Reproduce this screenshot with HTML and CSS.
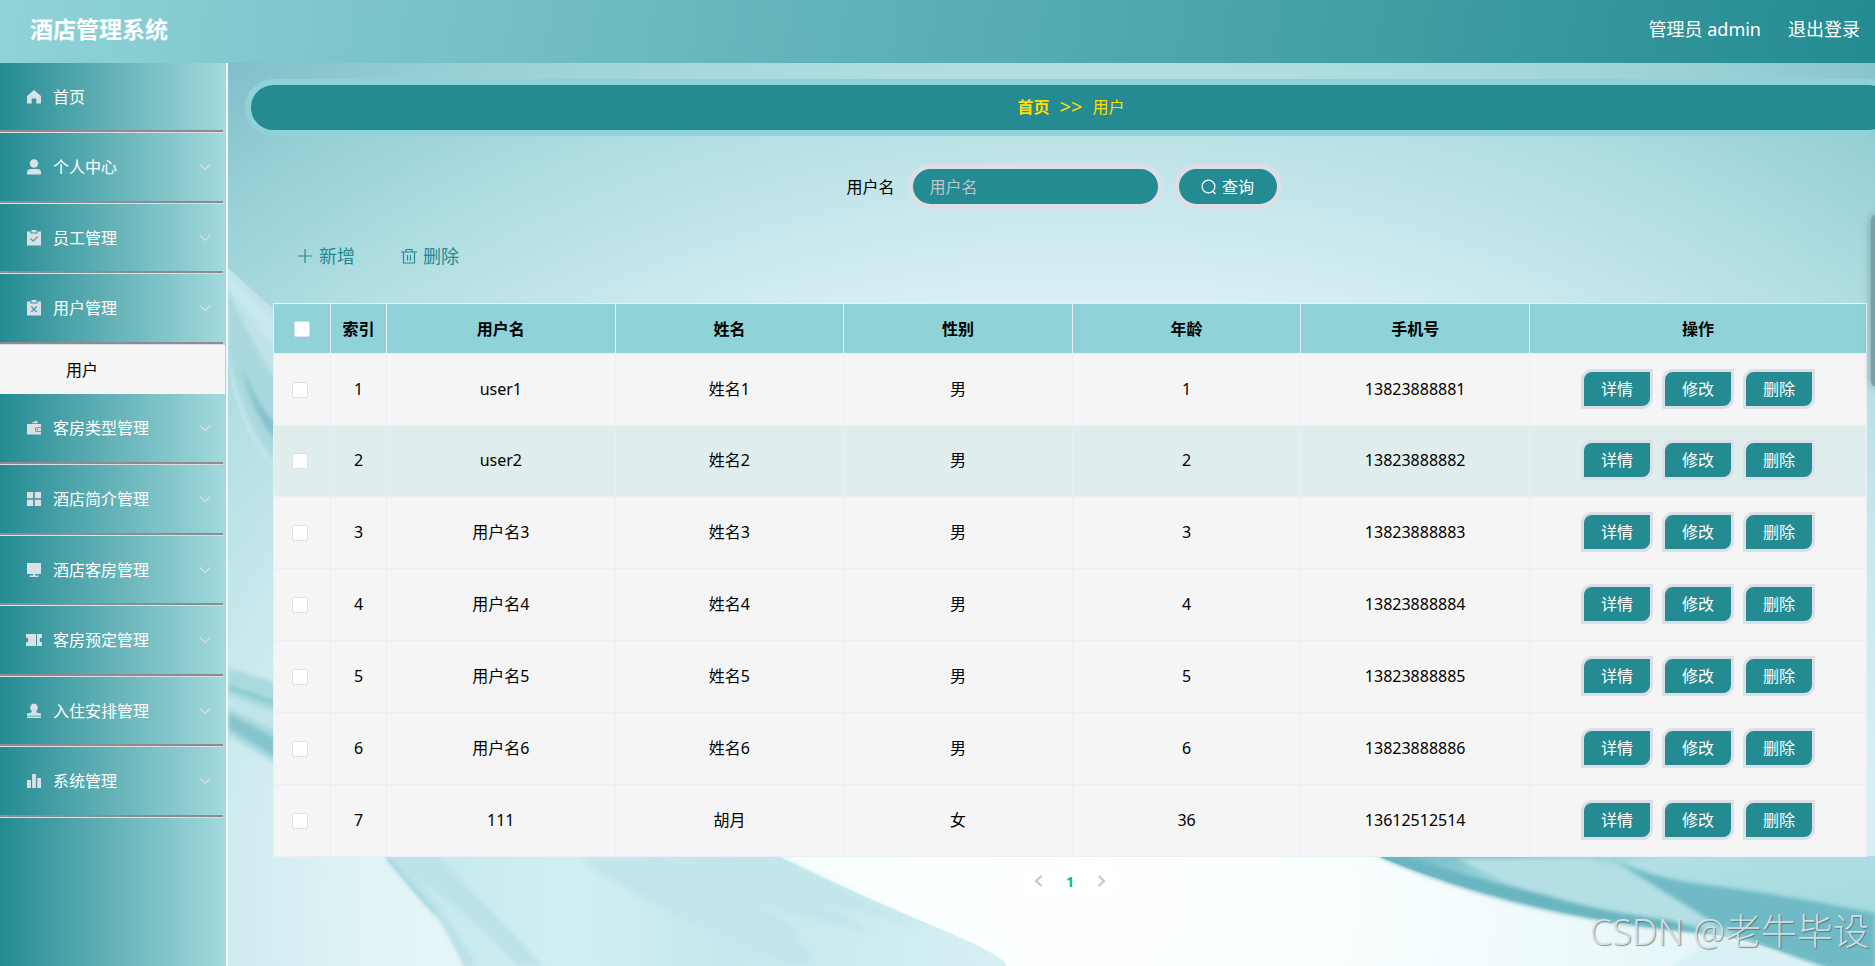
FILE: index.html
```html
<!DOCTYPE html>
<html lang="zh-CN">
<head>
<meta charset="utf-8">
<title>酒店管理系统</title>
<link rel="stylesheet" href="styles.css">
</head>
<body>
<svg class="sprite" aria-hidden="true">
  <symbol id="chevron" viewBox="0 0 12 12"><path d="M1 3.5 6 8.500 11 3.500" fill="none" stroke="currentColor" stroke-width="1.100"/></symbol>
</svg>
<header class="topbar">
  <h1 class="brand">酒店管理系统</h1>
  <div class="account"><span>管理员 admin</span><a href="#">退出登录</a></div>
</header>
<div class="shell">
  <nav class="sidebar">
    <ul class="menu">
      <li><a class="item" href="#"><svg class="icon" viewBox="0 0 18 18"><path d="M9 2 16 8v7.500h-4.700v-5H6.700v5H2V8z"/></svg><span>首页</span></a></li>
      <li><a class="item" href="#"><svg class="icon" viewBox="0 0 18 18"><circle cx="9" cy="5.500" r="4.200"/><path d="M2 16.500v-2q0-3.500 3.500-3.500h7q3.500 0 3.500 3.500v2z"/></svg><span>个人中心</span><svg class="arrow"><use href="#chevron"/></svg></a></li>
      <li><a class="item" href="#"><svg class="icon" viewBox="0 0 18 18"><path d="M2 2.500h3.500v2h7v-2H16v14H2z"/><path d="M6.500 1h5v2.500h-5z"/><path d="m5.500 9.500 2.700 2.700 4.500-4.500" fill="none" stroke="#46a0a8" stroke-width="1.200"/></svg><span>员工管理</span><svg class="arrow"><use href="#chevron"/></svg></a></li>
      <li><a class="item" href="#"><svg class="icon" viewBox="0 0 18 18"><path d="M2 2.500h3.500v2h7v-2H16v14H2z"/><path d="M6.500 1h5v2.500h-5z"/><path d="m6.300 7.500 5.400 5.500m0-5.500-5.400 5.500" fill="none" stroke="#46a0a8" stroke-width="1.200"/></svg><span>用户管理</span><svg class="arrow"><use href="#chevron"/></svg></a>
        <a class="subitem" href="#">用户</a></li>
      <li><a class="item" href="#"><svg class="icon" viewBox="0 0 18 18"><path d="M2 5h14v3h-3.500a2.500 2.500 0 0 0 0 5H16v2.500H2z"/><path d="m6 4.200 5.500-2.700 1.500 2.700z"/><path d="M16 8.800v3.400h-3.400a1.700 1.700 0 0 1 0-3.400z"/><circle cx="12.800" cy="10.500" r=".8" fill="#46a0a8"/></svg><span>客房类型管理</span><svg class="arrow"><use href="#chevron"/></svg></a></li>
      <li><a class="item" href="#"><svg class="icon" viewBox="0 0 18 18"><path d="M2 2h6.200v6.200H2zM9.800 2H16v6.200H9.800zM2 9.800h6.200V16H2zM9.800 9.800H16V16H9.800z"/></svg><span>酒店简介管理</span><svg class="arrow"><use href="#chevron"/></svg></a></li>
      <li><a class="item" href="#"><svg class="icon" viewBox="0 0 18 18"><path d="M2 2h14v11H2zM8 13h2v1.500h3.500V16h-9v-1.500H8z"/></svg><span>酒店客房管理</span><svg class="arrow"><use href="#chevron"/></svg></a></li>
      <li><a class="item" href="#"><svg class="icon" viewBox="0 0 18 18"><path d="M1 3h10v12H1v-3.500c3 0 3-5 0-5zM12 3h5v3.500c-3 0-3 5 0 5V15h-5z"/></svg><span>客房预定管理</span><svg class="arrow"><use href="#chevron"/></svg></a></li>
      <li><a class="item" href="#"><svg class="icon" viewBox="0 0 18 18"><path d="M9 1.500a4 4 0 0 1 2.500 7v2L16 11.500v2.200H2v-2.200l4.500-1v-2a4 4 0 0 1 2.500-7zM2 14.500h14V16H2z"/></svg><span>入住安排管理</span><svg class="arrow"><use href="#chevron"/></svg></a></li>
      <li><a class="item" href="#"><svg class="icon" viewBox="0 0 18 18"><path d="M2 8h3.800v8H2zM7.100 2h3.800v14H7.100zM12.200 6H16v10h-3.800z"/></svg><span>系统管理</span><svg class="arrow"><use href="#chevron"/></svg></a></li>
    </ul>
  </nav>
  <main class="main">
    <svg class="backdrop" viewBox="0 0 1647 903" preserveAspectRatio="none" aria-hidden="true">
      <defs>
        <radialGradient id="glow" gradientUnits="userSpaceOnUse" cx="0" cy="0" r="1092" gradientTransform="translate(860 840) scale(1.3 1)">
          <stop offset="0" stop-color="#fefeff"/><stop offset=".2" stop-color="#f8fefe"/><stop offset=".52" stop-color="#dff3f6"/><stop offset=".64" stop-color="#c8e8ec"/><stop offset=".77" stop-color="#afdde1"/><stop offset=".88" stop-color="#98d0d6"/><stop offset="1" stop-color="#7bbac5"/>
        </radialGradient>
        <linearGradient id="veil" x1="0" y1="0" x2="1" y2="0"><stop offset="0" stop-color="#c3e7ec"/><stop offset=".3" stop-color="#d1eff1"/><stop offset=".55" stop-color="#c5e8ec"/><stop offset="1" stop-color="#d6f0f3"/></linearGradient>
        <linearGradient id="ribbon" x1="0" y1="0" x2="1" y2="1"><stop offset="0" stop-color="#6ab9c3"/><stop offset=".3" stop-color="#b0dfe4"/><stop offset="1" stop-color="#a1d8de"/></linearGradient>
        <filter id="soft" x="-10%" y="-10%" width="120%" height="120%"><feGaussianBlur stdDeviation="2"/></filter>
        <filter id="softer" x="-10%" y="-10%" width="120%" height="120%"><feGaussianBlur stdDeviation="4"/></filter>
      </defs>
      <path fill="url(#glow)" d="M0 0h1647v903H0z"/>
      <path fill="#bfe3e9" d="M0 205 50 250V410Q10 370 0 300z"/>
      <g filter="url(#soft)">
        <path fill="#a9d9de" d="M0 228Q24 280 50 320V402Q14 360 0 290z"/>
        <path fill="#c9e8ee" d="M0 212Q30 240 50 258V290Q25 255 0 225z"/>
        <path fill="#84c3cc" d="M14 303Q30 345 50 362V380Q22 350 14 303z"/>
        <path fill="#a9dade" d="M0 605 50 620V702L0 672z"/>
        <path fill="#7fc5cc" d="M0 622 50 639V643L0 626z"/>
        <path fill="#c0e5ea" d="M0 632 50 650V668L0 645z"/>
        <path fill="#86c5cd" d="M0 650 50 676V696L0 665z"/>
      </g>
      <path fill="url(#veil)" d="M157 793H550Q640 836 710 865T778 903H236Q220 870 208 852 180 825 157 793z"/>
      <g filter="url(#soft)">
        <path fill="#bbe3e9" d="M157 793H210Q265 850 315 903H290Q235 845 190 815 225 860 249 903H236Q220 870 208 852 180 825 157 793z"/>
        <path d="m159 795 49 56" stroke="#9dd5dc" stroke-width="3"/>
        <path d="M420 793Q480 820 570 870" stroke="#b6dfe7" stroke-width="3" fill="none"/>
      </g>
      <g filter="url(#softer)">
        <path fill="#c1e5ea" d="M350 795H550Q630 836 700 866 640 850 580 836 620 850 650 872 560 850 520 836 560 866 590 900H560Q430 850 350 795z"/>
      </g>
      <path fill="url(#ribbon)" d="M1149 793H1647V903H1600Q1550 885 1489 872 1300 855 1149 793z"/>
      <g filter="url(#soft)">
        <path fill="#69b5c0" d="M1149 793Q1300 858 1489 871L1435 855Q1300 832 1175 793z"/>
        <path fill="#b4e0e5" d="M1230 796H1360Q1420 820 1489 861 1330 850 1230 796z"/>
        <path fill="#70bac5" d="M1381 794Q1420 815 1480 822T1647 850V905H1600Q1550 890 1489 862 1430 825 1381 794z"/>
        <path fill="#d8f1f4" d="M1489 875Q1540 885 1580 905H1440z"/>
      </g>
    </svg>
    <div class="crumbs"><a href="#">首页</a><span class="sep">&gt;&gt;</span><span>用户</span></div>
    <section class="content">
      <form class="search">
        <label for="username">用户名</label>
        <input id="username" class="field" type="text" placeholder="用户名">
        <button class="query" type="button"><svg viewBox="0 0 16 16"><circle cx="7.500" cy="7.500" r="6.400"/><path d="m12 12.500 2.500 2.500"/></svg>查询</button>
      </form>
      <div class="toolbar">
        <button type="button"><svg viewBox="0 0 16 16"><path d="M8 1v14M1 8h14"/></svg>新增</button>
        <button type="button"><svg viewBox="0 0 16 16"><path d="M0 4h16M2.500 4v11h11V4M5 4V1.500h6V4M6.500 7v5.500M9.500 7v5.500"/></svg>删除</button>
      </div>
      <table class="grid">
        <colgroup><col class="c-check"><col class="c-index"><col><col><col><col><col><col class="c-ops"></colgroup>
        <thead><tr><th><input type="checkbox" aria-label="全选"></th><th>索引</th><th>用户名</th><th>姓名</th><th>性别</th><th>年龄</th><th>手机号</th><th>操作</th></tr></thead>
        <tbody>
          <tr><td><input type="checkbox" aria-label="选择 1"></td><td>1</td><td>user1</td><td>姓名1</td><td>男</td><td>1</td><td>13823888881</td><td><div class="ops"><button type="button">详情</button><button type="button">修改</button><button type="button">删除</button></div></td></tr>
          <tr class="hover"><td><input type="checkbox" aria-label="选择 2"></td><td>2</td><td>user2</td><td>姓名2</td><td>男</td><td>2</td><td>13823888882</td><td><div class="ops"><button type="button">详情</button><button type="button">修改</button><button type="button">删除</button></div></td></tr>
          <tr><td><input type="checkbox" aria-label="选择 3"></td><td>3</td><td>用户名3</td><td>姓名3</td><td>男</td><td>3</td><td>13823888883</td><td><div class="ops"><button type="button">详情</button><button type="button">修改</button><button type="button">删除</button></div></td></tr>
          <tr><td><input type="checkbox" aria-label="选择 4"></td><td>4</td><td>用户名4</td><td>姓名4</td><td>男</td><td>4</td><td>13823888884</td><td><div class="ops"><button type="button">详情</button><button type="button">修改</button><button type="button">删除</button></div></td></tr>
          <tr><td><input type="checkbox" aria-label="选择 5"></td><td>5</td><td>用户名5</td><td>姓名5</td><td>男</td><td>5</td><td>13823888885</td><td><div class="ops"><button type="button">详情</button><button type="button">修改</button><button type="button">删除</button></div></td></tr>
          <tr><td><input type="checkbox" aria-label="选择 6"></td><td>6</td><td>用户名6</td><td>姓名6</td><td>男</td><td>6</td><td>13823888886</td><td><div class="ops"><button type="button">详情</button><button type="button">修改</button><button type="button">删除</button></div></td></tr>
          <tr><td><input type="checkbox" aria-label="选择 7"></td><td>7</td><td>111</td><td>胡月</td><td>女</td><td>36</td><td>13612512514</td><td><div class="ops"><button type="button">详情</button><button type="button">修改</button><button type="button">删除</button></div></td></tr>
        </tbody>
      </table>
      <div class="pager">
        <button type="button" aria-label="上一页"><svg viewBox="0 0 12 12"><path d="M8.500 1 3 6l5.500 5"/></svg></button>
        <button type="button" class="current">1</button>
        <button type="button" aria-label="下一页"><svg viewBox="0 0 12 12"><path d="M3.500 1 9 6l-5.500 5"/></svg></button>
      </div>
    </section>
    <div class="handle"></div>
    <div class="watermark">CSDN @老牛毕设</div>
  </main>
</div>
</body>
</html>
```
FILE: styles.css
```css
* { box-sizing: border-box; }
body {
  margin: 0;
  min-height: 100vh;
  display: flex;
  flex-direction: column;
  font: 16px/24px "Noto Sans", "Noto Sans CJK SC", sans-serif;
  color: #000;
  overflow: hidden;
}
button, input { font: inherit; color: inherit; }
button { cursor: pointer; border: 0; padding: 0; background: none; }
a { color: inherit; text-decoration: none; }
.sprite { display: none; }

.topbar {
  height: 63px;
  padding: 0 15px 6px 30px;
  display: flex;
  align-items: center;
  justify-content: space-between;
  color: #fff;
  background: linear-gradient(100deg, #90d3d8, #248b92);
}
.brand { margin: 0; font-size: 23px; line-height: 32px; font-weight: 700; }
.account { display: flex; gap: 27px; font-size: 18px; }

.shell { flex: 1; display: flex; }
.sidebar {
  flex: 0 0 228px;
  border-right: 2px solid #f2f4f5;
  background: linear-gradient(90deg, #248b92, #a4dadd);
}
.menu { list-style: none; margin: 0; padding: 0; }
.item {
  display: flex;
  align-items: center;
  height: 69px;
  margin: 0 3px 1px 0;
  padding: 0 12px 0 25px;
  color: #fff;
  border-bottom: 2px solid #8e8c92;
  box-shadow: 0 1px #dcdfe6;
}
.menu li:nth-child(even) .item { height: 70px; }
.menu li:nth-child(5) .item { height: 70px; }
.icon { width: 18px; height: 18px; margin-right: 10px; fill: #dcdfe6; }
.arrow { width: 12px; height: 12px; margin-left: auto; color: #dcdfe6; }
.subitem {
  display: block;
  height: 49px;
  margin-right: 1px;
  padding-left: 66px;
  line-height: 50px;
  color: #000;
  background: #f5f5f5;
}

.main { flex: 1; min-width: 0; position: relative; overflow: hidden; padding-top: 16px; }
.backdrop { position: absolute; inset: 0; width: 100%; height: 100%; z-index: -1; }
.crumbs {
  display: flex;
  justify-content: center;
  gap: 10px;
  margin: 0 -22px 0 17px;
  padding: 10px 0 11px;
  color: #fd0;
  background: #248b92;
  border: 6px solid #8fd2d8;
  border-radius: 30px;
}
.crumbs a { font-weight: 700; }
.crumbs .sep { font-size: 20px; }
.content { margin: 28px 8px 0 45px; }

.search { display: flex; align-items: center; justify-content: center; padding-right: 12px; }
.search label { margin-right: 13px; }
.field {
  width: 255px;
  height: 45px;
  margin-right: 11px;
  padding: 0 17px;
  color: #fff;
  background: #248b92;
  border: 5px solid #dcdfe6;
  border-radius: 23px;
}
.field::placeholder { color: #c0c4cc; opacity: 1; }
.query {
  display: flex;
  align-items: center;
  justify-content: center;
  gap: 5px;
  width: 108px;
  height: 45px;
  color: #fff;
  background: #248b92;
  border: 5px solid #dcdfe6;
  border-radius: 23px;
}
.query svg, .toolbar svg { width: 16px; height: 16px; fill: none; stroke: currentColor; stroke-width: 1.200; }

.toolbar { display: flex; gap: 46px; margin: 35px 0 35px 24px; font-size: 18px; color: #248b92; }
.toolbar button { display: flex; align-items: center; gap: 6px; }

.grid { width: 100%; table-layout: fixed; border-collapse: collapse; text-align: center; background: #f5f5f5; }
.grid th, .grid td { padding: 0; border: 1px solid #ebeef5; }
.grid th { height: 50px; background: #8fd2d8; }
.grid td { height: 72px; padding-bottom: 2px; }
.grid tr:nth-child(2) td { height: 71px; }
.grid td:first-child { padding: 0 5px 0 0; }
.hover { background: #dfeded; }
.c-check { width: 57px; }
.c-index { width: 56px; }
.c-ops { width: 337px; }
.grid input {
  appearance: none;
  display: block;
  width: 16px;
  height: 16px;
  margin: 0 auto;
  background: #fff;
  border: 1px solid #dcdfe6;
  border-radius: 2px;
}
.ops { display: flex; justify-content: center; gap: 9px; }
.ops button {
  width: 72px;
  height: 40px;
  color: #fff;
  background: #248b92;
  border: 3px solid #dcdfe6;
  border-radius: 11px 0;
}

.pager { display: flex; width: 92px; height: 26px; margin: 11px auto 0; background: #fff; }
.pager button { flex: 1; display: flex; align-items: center; justify-content: center; }
.pager svg { width: 12px; height: 12px; fill: none; stroke: #c0c4cc; stroke-width: 2; }
.pager .current { font-size: 15px; font-weight: 700; color: #00c292; }

.handle {
  position: absolute;
  top: 152px;
  right: -8px;
  width: 12px;
  height: 172px;
  border-radius: 6px;
  background: #7a9fa6;
  box-shadow: 0 0 8px rgba(0, 0, 0, .3);
}
.watermark {
  position: absolute;
  right: 6px;
  bottom: 10px;
  font-size: 36px;
  font-weight: 300;
  line-height: 48px;
  color: rgba(225, 229, 231, .9);
  text-shadow: 1px 1px 1px rgba(60, 80, 90, .6);
}
```
